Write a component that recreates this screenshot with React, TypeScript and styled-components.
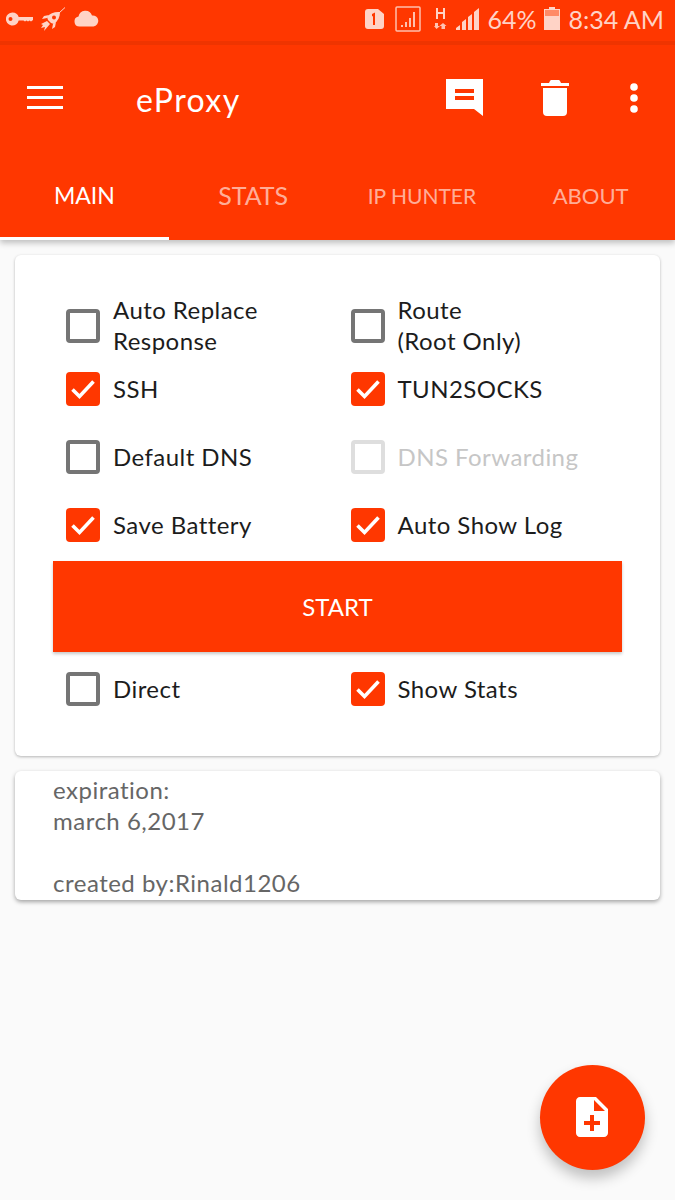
import React from "react";
import styled, { createGlobalStyle } from "styled-components";

const ORANGE = "#ff3700";
const FONT = `Lato, "Noto Sans", sans-serif`;

const GlobalStyle = createGlobalStyle`
  html, body {
    margin: 0;
    padding: 0;
    background: #fafafa;
  }
  * {
    box-sizing: border-box;
  }
`;

const Screen = styled.div`
  position: relative;
  width: 675px;
  height: 1200px;
  overflow: hidden;
  background: #fafafa;
  font-family: ${FONT};
`;

const Header = styled.header`
  background: ${ORANGE};
  box-shadow: 0 3px 6px rgba(0, 0, 0, 0.24);
`;

const StatusBar = styled.div`
  display: flex;
  align-items: center;
  height: 45px;
  padding: 0 11px 4px 6px;
  color: #ffd3c6;
  border-bottom: 4px solid #ef3400;
`;

const StatusLeft = styled.div`
  display: flex;
  align-items: center;
  gap: 8px;
  flex: 1;
`;

const StatusRight = styled.div`
  display: flex;
  align-items: center;
`;

const StatusText = styled.span<{ $gap: number }>`
  font-size: 25px;
  margin-left: ${(p) => p.$gap}px;
  white-space: nowrap;
`;

const StatusIcon = styled.svg<{ $gap?: number }>`
  display: block;
  flex: none;
  margin-left: ${(p) => p.$gap ?? 0}px;
`;

const Toolbar = styled.div`
  display: flex;
  align-items: center;
  height: 105px;
  padding-left: 27px;
`;

const Title = styled.div`
  flex: 1;
  margin-left: 73px;
  color: #fff;
  font-size: 32px;
  letter-spacing: 1.4px;
  padding-top: 3px;
`;

const ToolIcon = styled.svg<{ $right: number }>`
  display: block;
  flex: none;
  margin-right: ${(p) => p.$right}px;
`;

const Tabs = styled.nav`
  display: grid;
  grid-template-columns: repeat(4, 1fr);
  height: 90px;
`;

const Tab = styled.div<{ $active?: boolean; $size: number }>`
  display: flex;
  align-items: center;
  justify-content: center;
  padding-top: 3px;
  color: ${(p) => (p.$active ? "#fff" : "rgba(255, 255, 255, 0.62)")};
  font-size: ${(p) => p.$size}px;
  border-bottom: 3px solid ${(p) => (p.$active ? "#fff" : "transparent")};
`;

const Content = styled.main`
  display: flex;
  flex-direction: column;
  gap: 15px;
  padding: 15px 15px 0;
`;

const Card = styled.section`
  background: #fff;
  border-radius: 6px;
  box-shadow: 0 1px 3px rgba(0, 0, 0, 0.28);
`;

const OptionsCard = styled(Card)`
  height: 501px;
  padding: 41px 38px 0;
`;

const OptionGrid = styled.div`
  display: grid;
  grid-template-columns: 1fr 1fr;
  grid-auto-rows: 68px;
`;

const TopGrid = styled(OptionGrid)`
  grid-template-rows: 59px;
`;

const Option = styled.label`
  display: flex;
  align-items: center;
  gap: 13px;
  padding-left: 13px;
`;

const Box = styled.span<{ $checked?: boolean; $disabled?: boolean }>`
  display: flex;
  align-items: center;
  justify-content: center;
  flex: none;
  width: 34px;
  height: 34px;
  border-radius: 4px;
  background: ${(p) => (p.$checked ? ORANGE : "transparent")};
  border: ${(p) =>
    p.$checked ? "none" : `4px solid ${p.$disabled ? "#dedede" : "#757575"}`};
`;

const OptionText = styled.span<{ $disabled?: boolean }>`
  padding-bottom: 2px;
  color: ${(p) => (p.$disabled ? "#c6c6c6" : "#1c1c1c")};
  font-size: 24px;
  line-height: 31px;
  letter-spacing: 0.45px;
`;

const StartButton = styled.button`
  display: block;
  width: 100%;
  height: 91px;
  margin: 2px 0 3px;
  border: none;
  border-radius: 0;
  background: ${ORANGE};
  color: #fff;
  font-family: ${FONT};
  font-size: 24px;
  box-shadow: 0 2px 3px rgba(0, 0, 0, 0.22);
`;

const InfoCard = styled(Card)`
  height: 129px;
  padding: 3px 38px 0;
  color: #666;
  font-size: 24px;
  line-height: 31px;
  letter-spacing: 0.5px;
  box-shadow: 0 2px 4px rgba(0, 0, 0, 0.35);
`;

const InfoLine = styled.div`
  min-height: 31px;
`;

const Fab = styled.button`
  position: absolute;
  left: 540px;
  top: 1065px;
  display: flex;
  align-items: center;
  justify-content: center;
  width: 105px;
  height: 105px;
  padding: 0 2px 2px 0;
  border: none;
  border-radius: 50%;
  background: ${ORANGE};
  box-shadow: 0 8px 14px rgba(0, 0, 0, 0.24);
`;

function Check() {
  return (
    <svg width="26" height="22" viewBox="0 0 26 22">
      <path d="M2.5 11.5l7 7L23.5 3.5" fill="none" stroke="#fff" strokeWidth="3.6" />
    </svg>
  );
}

type Item = { label: React.ReactNode; checked?: boolean; disabled?: boolean };

function CheckOption({ label, checked, disabled }: Item) {
  return (
    <Option>
      <Box $checked={checked} $disabled={disabled}>
        {checked && <Check />}
      </Box>
      <OptionText $disabled={disabled}>{label}</OptionText>
    </Option>
  );
}

const topOptions: Item[] = [
  { label: <>Auto Replace<br />Response</> },
  { label: <>Route<br />(Root Only)</> },
  { label: "SSH", checked: true },
  { label: "TUN2SOCKS", checked: true },
  { label: "Default DNS" },
  { label: "DNS Forwarding", disabled: true },
  { label: "Save Battery", checked: true },
  { label: "Auto Show Log", checked: true },
];

const tabs = [
  { label: "MAIN", size: 23, active: true },
  { label: "STATS", size: 25 },
  { label: "IP HUNTER", size: 21 },
  { label: "ABOUT", size: 22 },
];

export default function App() {
  return (
    <Screen>
      <GlobalStyle />
      <Header>
        <StatusBar>
          <StatusLeft>
            <svg width="27" height="14" viewBox="0 0 27 14" fill="#ffd3c6">
              <path d="M6.5 0.5a6.5 6.5 0 0 1 6.2 4.500H27v3l-2 1.500-1.500-1-1.500 1-1.500-1-1.500 1-1.500-1H12.700A6.500 6.500 0 1 1 6.500.5zM4.500 5a2 2 0 1 0 0 4 2 2 0 0 0 0-4z" fillRule="evenodd" />
            </svg>
            <svg width="25" height="24" viewBox="0 0 25 24" fill="#ffd3c6">
              <path d="M19 5c0 5-2 9-6 12l-3-1-3-3-1-3C9 6 14 4.500 19 5z" />
              <path d="M8 8L3 9 1 12l5-1zM15 15l-1 5-3 2 1-5zM6 14l3 3-6 7 1-4-4 1 2-3-2-1z" />
              <path d="M18 6l6-5.500" stroke="#ffd3c6" strokeWidth="1" fill="none" />
              <circle cx="13" cy="10.500" r="2" fill="#ff3700" />
            </svg>
            <svg width="25" height="17" viewBox="0 0 25 17" fill="#ffd3c6">
              <path d="M5.500 16.500a5 5 0 0 1-1-9.900A7 7 0 0 1 18 5.500a5.500 5.500 0 0 1 1.500 11z" />
            </svg>
          </StatusLeft>
          <StatusRight>
            <StatusIcon width="19" height="20" viewBox="0 0 19 20">
              <path d="M3 0h10l6 5v12a3 3 0 0 1-3 3H3a3 3 0 0 1-3-3V3a3 3 0 0 1 3-3z" fill="#ffd3c6" />
              <path d="M7 5l3-1.500V16H8V7l-1 .5z" fill="#ff3700" />
            </StatusIcon>
            <StatusIcon $gap={11} width="26" height="26" viewBox="0 0 26 26">
              <rect x="1" y="1" width="24" height="24" rx="1" fill="none" stroke="#ffc0ad" strokeWidth="1.500" />
              <path d="M6 21h2v-2H6zM10 21h2v-5h-2zM14 21h2v-9h-2zM18 21h2V6h-2z" fill="#ffc0ad" />
            </StatusIcon>
            <StatusIcon $gap={13} width="13" height="21" viewBox="0 0 13 21" fill="#ffd3c6">
              <path d="M2 0h2v4h5V0h2v11H9V6H4v5H2z" />
              <path d="M1 15h3v3h2l-3.500 3L0 18h1zM9 15l3.500 3H11v3H7.500v-3H5.500z" opacity="0.9" />
            </StatusIcon>
            <StatusIcon $gap={9} width="24" height="22" viewBox="0 0 24 22" fill="#ffd3c6">
              <path d="M0 22v-2l4-3v5zM6 22v-8l4-3v11zM12 22V9l4-3v16zM18 22V4l5-4v22z" />
            </StatusIcon>
            <StatusText $gap={8}>64%</StatusText>
            <StatusIcon $gap={7} width="16" height="23" viewBox="0 0 16 23">
              <path d="M5 0h6v2h5v21H0V2h5z" fill="#ffd3c6" />
              <path d="M1 3h14v6H1z" fill="#ff8a66" />
            </StatusIcon>
            <StatusText $gap={9}>8:34 AM</StatusText>
          </StatusRight>
        </StatusBar>
        <Toolbar>
          <svg width="36" height="23" viewBox="0 0 36 23" fill="#fff">
            <path d="M0 0h36v3H0zM0 10h36v3H0zM0 20h36v3H0z" />
          </svg>
          <Title>eProxy</Title>
          <ToolIcon $right={58} width="37" height="37" viewBox="0 0 37 37">
            <path d="M0 0h37v37l-9-7H0z" fill="#fff" />
            <path d="M9 10h19v4H9zM9 17h19v4H9z" fill={ORANGE} />
          </ToolIcon>
          <ToolIcon $right={61} width="28" height="36" viewBox="0 0 28 36" fill="#fff">
            <path d="M9 1a2 2 0 0 1 2-1h6a2 2 0 0 1 2 1l1 2h8v3H0V3h8zM2 8h24v24a4 4 0 0 1-4 4H6a4 4 0 0 1-4-4z" />
          </ToolIcon>
          <ToolIcon $right={37} width="8" height="30" viewBox="0 0 8 30" fill="#fff">
            <circle cx="4" cy="4" r="3.800" />
            <circle cx="4" cy="15" r="3.800" />
            <circle cx="4" cy="26" r="3.800" />
          </ToolIcon>
        </Toolbar>
        <Tabs>
          {tabs.map((t) => (
            <Tab key={t.label} $active={t.active} $size={t.size}>
              {t.label}
            </Tab>
          ))}
        </Tabs>
      </Header>
      <Content>
        <OptionsCard>
          <TopGrid>
            {topOptions.map((o, i) => (
              <CheckOption key={i} {...o} />
            ))}
          </TopGrid>
          <StartButton>START</StartButton>
          <OptionGrid>
            <CheckOption label="Direct" />
            <CheckOption label="Show Stats" checked />
          </OptionGrid>
        </OptionsCard>
        <InfoCard>
          <InfoLine>expiration:</InfoLine>
          <InfoLine>march 6,2017</InfoLine>
          <InfoLine />
          <InfoLine>created by:Rinald1206</InfoLine>
        </InfoCard>
      </Content>
      <Fab>
        <svg width="48" height="48" viewBox="0 0 24 24" fill="#fff">
          <path d="M14 2H6c-1.100 0-1.990.9-1.990 2L4 20c0 1.100.89 2 1.990 2H18c1.100 0 2-.9 2-2V8l-6-6zm2 14h-3v3h-2v-3H8v-2h3v-3h2v3h3v2zm-3-7V3.500L18.500 9H13z" />
        </svg>
      </Fab>
    </Screen>
  );
}
